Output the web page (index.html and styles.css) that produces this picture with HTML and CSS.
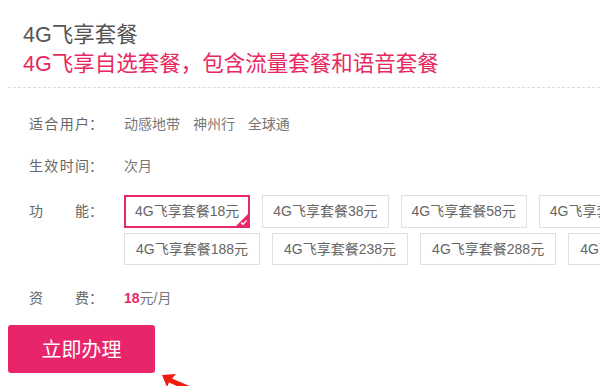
FILE: index.html
```html
<!DOCTYPE html>
<html lang="zh-CN">
<head>
    <meta charset="UTF-8">
    <meta name="viewport" content="width=device-width, initial-scale=1.0">
    <title>4G飞享套餐</title>
    <link rel="stylesheet" href="styles.css">
</head>
<body>
    <main class="package">
        <header class="package-head">
            <h1 class="package-title">4G飞享套餐</h1>
            <p class="package-desc">4G飞享自选套餐，包含流量套餐和语音套餐</p>
        </header>

        <section class="package-form">
            <div class="row">
                <span class="label"><span class="name">适合用户</span>：</span>
                <span class="value">
                    <span class="brand">动感地带</span>
                    <span class="brand">神州行</span>
                    <span class="brand">全球通</span>
                </span>
            </div>

            <div class="row">
                <span class="label"><span class="name">生效时间</span>：</span>
                <span class="value">次月</span>
            </div>

            <div class="row row-options">
                <span class="label"><span class="name">功能</span>：</span>
                <div class="options">
                    <div class="option-line">
                        <a class="option selected">4G飞享套餐18元
                            <svg class="check" width="12" height="12" viewBox="0 0 12 12">
                                <path d="M12 0 L12 12 L0 12 Z" fill="#e8266a"/>
                                <path d="M5 8.5 L7 10.3 L10.6 6.4" fill="none" stroke="#fff" stroke-width="1.3"/>
                            </svg>
                        </a>
                        <a class="option">4G飞享套餐38元</a>
                        <a class="option">4G飞享套餐58元</a>
                        <a class="option">4G飞享套餐88元</a>
                    </div>
                    <div class="option-line">
                        <a class="option">4G飞享套餐188元</a>
                        <a class="option">4G飞享套餐238元</a>
                        <a class="option">4G飞享套餐288元</a>
                        <a class="option">4G飞享套餐388元</a>
                    </div>
                </div>
            </div>

            <div class="row">
                <span class="label"><span class="name">资费</span>：</span>
                <span class="value"><b class="price">18</b>元/月</span>
            </div>

            <button class="submit" type="button">立即办理</button>
        </section>

        <svg class="pointer" width="50" height="16" viewBox="0 0 50 16">
            <path d="M3 3 L17 2 L13 6.5 L40 18 L36 22 L10 10.5 L8 15 Z" fill="#f01c10"/>
        </svg>
    </main>
</body>
</html>
```

FILE: styles.css
```css
html, body {
    margin: 0;
    overflow: hidden;
}

body {
    background-color: #fff;
    font-family: "Liberation Sans", "Noto Sans CJK SC", sans-serif;
    color: #666;
}

.package {
    position: relative;
    height: 386px;
}

.package-head {
    padding: 21px 0 0 23px;
    margin-bottom: 8px;
}

.package-title,
.package-desc {
    margin: 0;
    font-size: 21.5px;
    line-height: 29px;
    font-weight: normal;
    white-space: nowrap;
}

.package-title {
    color: #555;
}

.package-desc {
    color: #e8285f;
}

.package-form {
    border-top: 1px dashed #dcdcdc;
    margin-left: 8px;
    padding-top: 15px;
}

.row {
    display: flex;
    align-items: center;
    min-height: 42px;
    padding-left: 21px;
    font-size: 14px;
}

.label {
    display: flex;
    width: 95px;
    flex-shrink: 0;
    color: #666;
    line-height: 20px;
}

.label .name {
    width: 60px;
    text-align-last: justify;
}

.value {
    color: #777;
    line-height: 20px;
}

.brand {
    margin-right: 9px;
}

.price {
    color: #e8266a;
}

.row-options {
    align-items: flex-start;
    padding-top: 8px;
    margin-bottom: 12px;
}

.row-options .label {
    line-height: 33px;
}

.options {
    display: flex;
    flex-direction: column;
    gap: 5px;
}

.option-line {
    display: flex;
    gap: 12px;
}

.option {
    position: relative;
    flex-shrink: 0;
    height: 33px;
    box-sizing: border-box;
    padding: 0 10px;
    border: 1px solid #e0e0e0;
    line-height: 31px;
    color: #666;
    white-space: nowrap;
}

.option-line + .option-line .option {
    height: 32px;
    line-height: 30px;
    padding: 0 11px;
}

.option.selected {
    border: 2px solid #e8266a;
    padding: 0 9px;
    line-height: 29px;
}

.check {
    position: absolute;
    right: 0;
    bottom: 0;
}

.submit {
    display: block;
    margin-top: 6px;
    width: 147px;
    height: 48px;
    border: none;
    border-radius: 3px;
    background-color: #e8256a;
    color: #fff;
    font-family: "Noto Sans CJK SC", sans-serif;
    font-size: 20px;
    line-height: 48px;
    padding: 0;
    cursor: pointer;
}

.pointer {
    position: absolute;
    left: 159px;
    top: 372px;
}
```
